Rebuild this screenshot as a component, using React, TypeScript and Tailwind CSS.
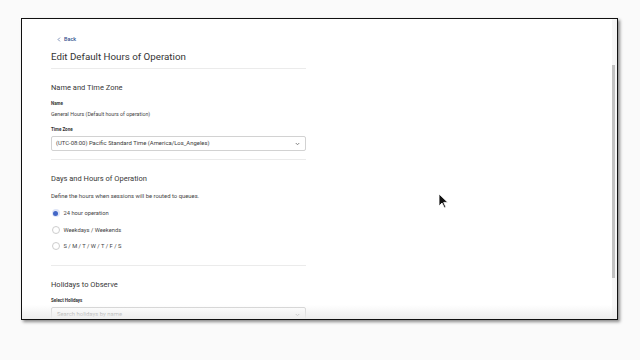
import React from "react";

function Chevron() {
  return (
    <svg width="5" height="4" viewBox="0 0 10 8" className="block">
      <path d="M1.5 2 L5 5.5 L8.5 2" fill="none" stroke="#777" strokeWidth="1.8" />
    </svg>
  );
}

function Radio({ checked, label }: { checked?: boolean; label: string }) {
  return (
    <div className="flex h-[16.5px] items-center">
      {checked ? (
        <div className="ml-[0.5px] flex h-[8px] w-[8px] items-center justify-center rounded-full bg-[#dfe6f7]">
          <div className="h-[5px] w-[5px] rounded-full bg-[#4266c6]" />
        </div>
      ) : (
        <div className="ml-[0.5px] h-[8px] w-[8px] rounded-full border border-[#cdcdcd] bg-white" />
      )}
      <span className="ml-[4px] text-[5.75px] leading-[8px] text-[#444]">{label}</span>
    </div>
  );
}

export default function App() {
  return (
    <div
      className="h-[360px] w-[640px] overflow-hidden bg-[#fafafa] pl-[21px] pt-[18px]"
      style={{ fontFamily: "Roboto, 'Liberation Sans', sans-serif" }}
    >
      <div className="relative flex h-[302px] w-[597px] overflow-hidden border border-[#111] bg-white shadow-[2px_2px_3px_rgba(0,0,0,0.45)]">
        <div className="flex-1 overflow-hidden pl-[29px] pt-[16px]">
          <div className="w-[255px]">
            <div className="flex h-[8px] items-center pl-[6px] text-[5.5px] font-medium text-[#34518f]">
              <svg width="4" height="5" viewBox="0 0 6 8" className="mr-[3px]">
                <path d="M4.5 1 L1.5 4 L4.5 7" fill="none" stroke="#34518f" strokeWidth="1" />
              </svg>
              Back
            </div>
            <div className="mt-[7px] h-[14px] text-[9.75px] leading-[14px] text-[#333]">
              Edit Default Hours of Operation
            </div>
            <div className="mt-[4px] h-px bg-[#ebebeb]" />

            <div className="mt-[13px] h-[12px] text-[7.5px] leading-[12px] text-[#383838]">Name and Time Zone</div>
            <div className="mt-[6px] h-[7px] text-[4.5px] font-bold leading-[7px] text-[#333]">Name</div>
            <div className="mt-[3px] h-[8px] text-[5.25px] leading-[8px] text-[#444]">
              General Hours (Default hours of operation)
            </div>
            <div className="mt-[8px] h-[7px] text-[4.5px] font-bold leading-[7px] text-[#333]">Time Zone</div>
            <div className="mt-[3px] flex h-[15px] items-center justify-between rounded-[2px] border border-[#d2d2d2] pl-[4px] pr-[5px]">
              <span className="text-[5.9px] text-[#3a3a3a]">(UTC-08:00) Pacific Standard Time (America/Los_Angeles)</span>
              <Chevron />
            </div>
            <div className="mt-[8px] h-px bg-[#ebebeb]" />

            <div className="mt-[13px] h-[12px] text-[7.5px] leading-[12px] text-[#383838]">Days and Hours of Operation</div>
            <div className="mt-[7px] h-[8px] text-[5.9px] leading-[8px] text-[#444]">
              Define the hours when sessions will be routed to queues.
            </div>
            <div className="mt-[4.75px]">
              <Radio checked label="24 hour operation" />
              <Radio label="Weekdays / Weekends" />
              <Radio label="S / M / T / W / T / F / S" />
            </div>
            <div className="mt-[10.75px] h-px bg-[#ebebeb]" />

            <div className="mt-[13px] h-[12px] text-[7.5px] leading-[12px] text-[#383838]">Holidays to Observe</div>
            <div className="mt-[5.5px] h-[7px] text-[4.5px] font-bold leading-[7px] text-[#333]">Select Holidays</div>
            <div className="mt-[3.5px] flex h-[15px] items-center justify-between rounded-[2px] border border-[#d2d2d2] pl-[5px] pr-[5px]">
              <span className="text-[5.9px] text-[#6a6a6a]">Search holidays by name</span>
              <Chevron />
            </div>
          </div>
        </div>
        <div className="flex w-[5px] flex-col bg-[#f6f6f6] pr-[1px]">
          <div className="mt-[46px] h-[213px] w-[3px] bg-[#c2c2c2]" />
        </div>
        <div className="pointer-events-none absolute bottom-0 left-0 right-0 h-[14px] bg-gradient-to-b from-transparent to-[#ececec]" />
        <svg
          className="absolute left-[416px] top-[174px]"
          width="11"
          height="16"
          viewBox="0 0 11 16"
        >
          <path d="M1 1 L1 13 L4 10 L6.5 15 L8 14.3 L5.7 9.4 L9.8 9.4 Z" fill="#111" stroke="#fff" strokeWidth="0.8" />
        </svg>
      </div>
    </div>
  );
}
